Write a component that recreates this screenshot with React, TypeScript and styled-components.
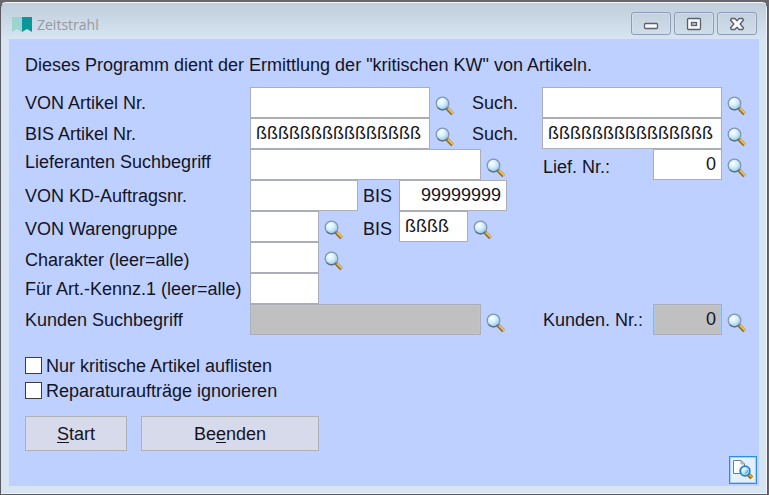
import React, { useId } from "react";
import styled, { createGlobalStyle, css } from "styled-components";

const GlobalStyle = createGlobalStyle`
  *, *::before, *::after { box-sizing: border-box; }
  html, body, #root { height: 100%; }
  body {
    margin: 0;
    background: #68686c;
    color: #14141f;
    font-family: "Liberation Sans", Arial, sans-serif;
    font-size: 18px;
    line-height: 26px;
  }
  button, input { font: inherit; color: inherit; }
`;

const Desktop = styled.div`
  display: flex;
  min-height: 100%;
  padding: 2px 1px 0 0;
`;

const Window = styled.main`
  flex: 1;
  display: flex;
  flex-direction: column;
  padding: 0 8px 8px;
  border: 1px solid #5a5a60;
  border-top-color: #f4f7fa;
  border-radius: 6px 6px 0 0;
  background: linear-gradient(#c0cddb, #d7e4f2 36px);
  box-shadow: inset -1px -1px #eef4fa;
`;

const TitleBar = styled.header`
  display: flex;
  align-items: center;
  height: 36px;
  padding: 8px 2px 0 3px;
`;

const Title = styled.h1`
  flex: 1;
  margin: 0 0 0 5px;
  color: #96999e;
  font: 400 14px/20px "Open Sans", "Noto Sans", sans-serif;
`;

const CaptionButtons = styled.div`
  display: flex;
  align-self: flex-start;
  gap: 3px;
  margin-top: 1px;
`;

const CaptionButton = styled.button`
  display: grid;
  place-items: center;
  width: 40px;
  height: 23px;
  padding: 0;
  border: 1px solid #8f9cb8;
  border-radius: 3px;
  background: linear-gradient(#c4d1de, #d0dde9);
  box-shadow: inset 0 0 0 1px #d3deea;
`;

const Panel = styled.form`
  flex: 1;
  display: flex;
  flex-direction: column;
  padding: 13px 2px 2px 16px;
  background: #bed0ff;
`;

const Intro = styled.p`
  margin: 0 0 9px;
`;

const Row = styled.div`
  display: flex;
  height: 31px;
`;

type Align = "start" | "center" | "end";

const Label = styled.label<{ $width: number; $align?: Align }>`
  flex: none;
  align-self: ${(p) => p.$align ?? "center"};
  width: ${(p) => p.$width}px;
  white-space: nowrap;
`;

const Fields = styled.div`
  flex: 1;
  display: flex;
`;

const EndFields = styled.div`
  display: flex;
  padding-right: 10px;
`;

const TextField = styled.input<{ $width: number; $numeric?: boolean }>`
  width: ${(p) => p.$width}px;
  height: 31px;
  padding: 0 5px;
  border: 1px solid #abadb9;
  border-radius: 0;
  outline: none;
  background: #fff;
  ${(p) =>
    p.$numeric &&
    css`
      text-align: right;
    `}
  &:disabled {
    background: #c0c0c0;
    color: #14141f;
    opacity: 1;
    box-shadow: inset 0 0 0 1px #abc8e4;
  }
`;

const LookupButton = styled.button`
  align-self: flex-end;
  width: 20px;
  height: 20px;
  margin: 0 0 2px 5px;
  padding: 0;
  border: 0;
  background: none;
  svg { display: block; }
`;

const BisLabel = styled(Label)`
  margin-left: auto;
`;

const LeadFields = styled.div`
  display: flex;
  width: 149px;
`;

const Options = styled.div`
  margin-top: 18px;
`;

const Option = styled.label`
  display: flex;
  align-items: center;
  gap: 4px;
  height: 25px;
`;

const CheckBox = styled.input`
  appearance: none;
  width: 17px;
  height: 17px;
  margin: 0;
  border: 1px solid #3c3c3c;
  background: #fff;
  &:checked { box-shadow: inset 0 0 0 3px #fff; background: #333; }
`;

const Actions = styled.div`
  display: flex;
  gap: 14px;
  margin-top: 13px;
`;

const ActionButton = styled.button<{ $width: number }>`
  width: ${(p) => p.$width}px;
  height: 35px;
  padding: 0;
  border: 1px solid #adb2b5;
  border-radius: 0;
  background: #d6daeb;
  u { text-underline-offset: 2px; }
`;

const StatusCorner = styled.div`
  display: flex;
  justify-content: flex-end;
  margin-top: auto;
`;

const PreviewButton = styled.button`
  display: grid;
  place-items: center;
  width: 28px;
  height: 28px;
  padding: 0;
  border: 1px solid #2d8ce3;
  background: #e3effb;
  box-shadow: inset 0 0 0 1px #a6d0f5;
`;

function BookmarkIcon() {
  return (
    <svg width="20" height="16" viewBox="0 0 20 16" aria-hidden="true">
      <path d="M0 0h10v15l-5-3-5 3z" fill="#9bd5d1" />
      <path d="M10 0h10v15l-5-3-5 3z" fill="#0b9699" />
    </svg>
  );
}

function MagnifierIcon() {
  const glass = useId();
  return (
    <svg width="20" height="20" viewBox="0 0 20 20" aria-hidden="true">
      <defs>
        <radialGradient id={glass} cx="38%" cy="32%" r="70%">
          <stop offset="0" stopColor="#fbffff" />
          <stop offset="0.5" stopColor="#d2eefb" />
          <stop offset="1" stopColor="#93c5e4" />
        </radialGradient>
      </defs>
      <path d="M12.2 12.4l5.4 5.6" stroke="#86692f" strokeWidth="3.8" />
      <path d="M13 12.300l5.100 5.300" stroke="#ebbd52" strokeWidth="2.200" />
      <circle cx="7.500" cy="7.500" r="6.300" fill={`url(#${glass})`} stroke="#8296ae" strokeWidth="1.300" />
      <path d="M2.700 11.700a6.300 6.300 0 0 0 9.600 0" fill="none" stroke="#586b80" strokeWidth="1.200" />
    </svg>
  );
}

function PreviewIcon() {
  return (
    <svg width="22" height="22" viewBox="0 0 22 22" aria-hidden="true">
      <path d="M1.500 1.500h7.500l3.500 3.500v9.500h-11z" fill="#fcfdff" stroke="#737b8b" />
      <path d="M9 1.500v3.500h3.500z" fill="#c9d2e2" stroke="#8d95a8" strokeWidth="0.8" />
      <path d="M16 15l3.800 3.800" stroke="#7a5010" strokeWidth="4" />
      <path d="M16.800 15.300l3 3" stroke="#dfa02a" strokeWidth="2.600" />
      <circle cx="13" cy="12" r="4.800" fill="#b9e6fc" stroke="#257fca" strokeWidth="1.800" />
      <path d="M10.800 12.500c.3-2 1.600-3 3.200-3" fill="none" stroke="#fff" strokeWidth="1.500" />
      <path d="M15.500 11c0 2-1 3.300-2.800 3.600" fill="none" stroke="#57b4eb" strokeWidth="1.300" />
    </svg>
  );
}

function MinimizeIcon() {
  return (
    <svg width="16" height="14" viewBox="0 0 16 14" aria-hidden="true">
      <rect x="1.500" y="6.500" width="13" height="5" rx="1" fill="#fafafa" stroke="#5c6070" strokeWidth="1.300" />
    </svg>
  );
}

function MaximizeIcon() {
  return (
    <svg width="16" height="14" viewBox="0 0 16 14" aria-hidden="true">
      <rect x="1.500" y="1.500" width="13" height="11" rx="1" fill="#f7f7f7" stroke="#5c6070" strokeWidth="1.300" />
      <rect x="5.500" y="5.500" width="5" height="3" fill="#bcc9d8" stroke="#5c6070" strokeWidth="1.300" />
    </svg>
  );
}

function CloseIcon() {
  return (
    <svg width="16" height="14" viewBox="0 0 16 14" aria-hidden="true">
      <path
        d="M2.500 1.500h3.300L8 3.800l2.200-2.300h3.300l1 1.500L11.200 7l3.300 4-1 1.500h-3.300L8 10.200l-2.200 2.300H2.500L1.500 11 4.800 7 1.500 3z"
        fill="#fafafa"
        stroke="#5c6070"
        strokeWidth="1.400"
        strokeLinejoin="round"
      />
    </svg>
  );
}

function Lookup({ name }: { name: string }) {
  return (
    <LookupButton type="button" aria-label={`${name} suchen`}>
      <MagnifierIcon />
    </LookupButton>
  );
}

const MAX_KEY = "ß".repeat(15);

export default function App() {
  return (
    <>
      <GlobalStyle />
      <Desktop>
        <Window>
          <TitleBar>
            <BookmarkIcon />
            <Title>Zeitstrahl</Title>
            <CaptionButtons>
              <CaptionButton type="button" aria-label="Minimieren">
                <MinimizeIcon />
              </CaptionButton>
              <CaptionButton type="button" aria-label="Maximieren">
                <MaximizeIcon />
              </CaptionButton>
              <CaptionButton type="button" aria-label="Schließen">
                <CloseIcon />
              </CaptionButton>
            </CaptionButtons>
          </TitleBar>
          <Panel onSubmit={(e: React.FormEvent) => e.preventDefault()}>
            <Intro>Dieses Programm dient der Ermittlung der "kritischen KW" von Artikeln.</Intro>

            <Row>
              <Label $width={225} htmlFor="artikel-von">VON Artikel Nr.</Label>
              <Fields>
                <TextField $width={180} id="artikel-von" />
                <Lookup name="Artikel von" />
              </Fields>
              <EndFields>
                <Label $width={70} htmlFor="such-von">Such.</Label>
                <TextField $width={180} id="such-von" />
                <Lookup name="Suchbegriff von" />
              </EndFields>
            </Row>

            <Row>
              <Label $width={225} htmlFor="artikel-bis">BIS Artikel Nr.</Label>
              <Fields>
                <TextField $width={180} id="artikel-bis" defaultValue={MAX_KEY} />
                <Lookup name="Artikel bis" />
              </Fields>
              <EndFields>
                <Label $width={70} htmlFor="such-bis">Such.</Label>
                <TextField $width={180} id="such-bis" defaultValue={MAX_KEY} />
                <Lookup name="Suchbegriff bis" />
              </EndFields>
            </Row>

            <Row>
              <Label $width={225} $align="start" htmlFor="lieferant">Lieferanten Suchbegriff</Label>
              <Fields>
                <TextField $width={231} id="lieferant" />
                <Lookup name="Lieferant" />
              </Fields>
              <EndFields>
                <Label $width={110} $align="end" htmlFor="lief-nr">Lief. Nr.:</Label>
                <TextField $width={69} $numeric id="lief-nr" defaultValue="0" />
                <Lookup name="Lieferantennummer" />
              </EndFields>
            </Row>

            <Row>
              <Label $width={225} htmlFor="auftrag-von">VON KD-Auftragsnr.</Label>
              <LeadFields>
                <TextField $width={108} id="auftrag-von" />
                <BisLabel $width={36} htmlFor="auftrag-bis">BIS</BisLabel>
              </LeadFields>
              <TextField $width={108} $numeric id="auftrag-bis" defaultValue="99999999" />
            </Row>

            <Row>
              <Label $width={225} $align="end" htmlFor="gruppe-von">VON Warengruppe</Label>
              <LeadFields>
                <TextField $width={69} id="gruppe-von" />
                <Lookup name="Warengruppe von" />
                <BisLabel $width={36} $align="end" htmlFor="gruppe-bis">BIS</BisLabel>
              </LeadFields>
              <TextField $width={69} id="gruppe-bis" defaultValue="ßßßß" />
              <Lookup name="Warengruppe bis" />
            </Row>

            <Row>
              <Label $width={225} $align="end" htmlFor="charakter">Charakter (leer=alle)</Label>
              <TextField $width={69} id="charakter" />
              <Lookup name="Charakter" />
            </Row>

            <Row>
              <Label $width={225} htmlFor="kennz">Für Art.-Kennz.1 (leer=alle)</Label>
              <TextField $width={69} id="kennz" />
            </Row>

            <Row>
              <Label $width={225} htmlFor="kunde">Kunden Suchbegriff</Label>
              <Fields>
                <TextField $width={231} id="kunde" disabled />
                <Lookup name="Kunde" />
              </Fields>
              <EndFields>
                <Label $width={110} htmlFor="kunden-nr">Kunden. Nr.:</Label>
                <TextField $width={69} $numeric id="kunden-nr" defaultValue="0" disabled />
                <Lookup name="Kundennummer" />
              </EndFields>
            </Row>

            <Options>
              <Option>
                <CheckBox type="checkbox" />
                Nur kritische Artikel auflisten
              </Option>
              <Option>
                <CheckBox type="checkbox" />
                Reparaturaufträge ignorieren
              </Option>
            </Options>

            <Actions>
              <ActionButton $width={102} type="submit" accessKey="s">
                <u>S</u>tart
              </ActionButton>
              <ActionButton $width={178} type="button" accessKey="e">
                Be<u>e</u>nden
              </ActionButton>
            </Actions>

            <StatusCorner>
              <PreviewButton type="button" aria-label="Vorschau">
                <PreviewIcon />
              </PreviewButton>
            </StatusCorner>
          </Panel>
        </Window>
      </Desktop>
    </>
  );
}
